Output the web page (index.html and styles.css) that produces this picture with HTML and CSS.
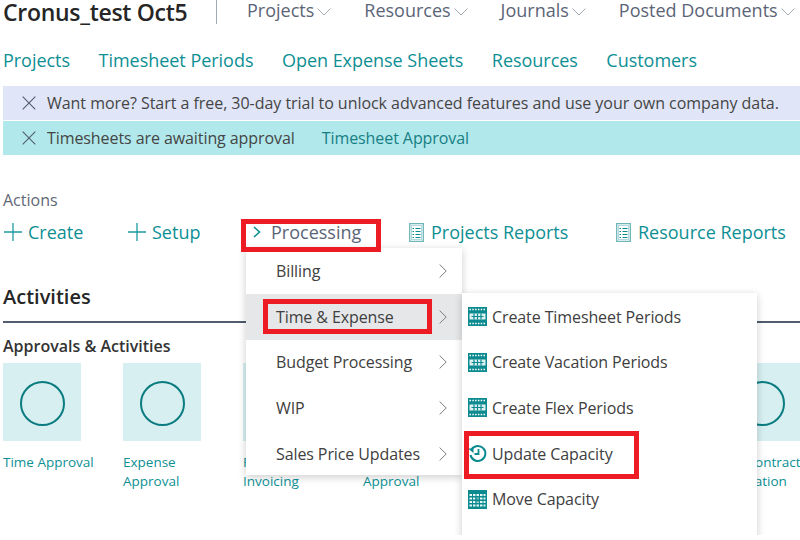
FILE: index.html
```html
<!DOCTYPE html>
<html>
<head>
<meta charset="utf-8">
<title>Cronus_test Oct5</title>
<link rel="stylesheet" href="styles.css">
</head>
<body>

<svg class="defs" width="0" height="0">
  <symbol id="grid" viewBox="0 0 19 19">
    <rect width="19" height="19" fill="#0b8a8f"/>
    <path d="M1.500 2.500h16M1.500 16.500h16" stroke="#fff" stroke-width="1.400" stroke-dasharray="1.500 1.300"/>
    <path d="M1.500 6.500h16v6h-16z" fill="#dff1f1"/>
    <path d="M3.500 9.500h12M6 6.500v6M9.500 6.500v6M13 6.500v6" stroke="#0b8a8f" stroke-width="1.200"/>
  </symbol>
  <symbol id="grid-move" viewBox="0 0 19 19">
    <rect width="19" height="19" fill="#0b8a8f"/>
    <path d="M1.500 5h16M1.500 8.500h16M1.500 12h16M1.500 15.500h16" stroke="#e6f5f5" stroke-width="2" stroke-dasharray="2.500 1"/>
    <path d="M7 7.500h5v5H7z" fill="#0b8a8f" opacity=".6"/>
  </symbol>
  <symbol id="report" viewBox="0 0 15 19">
    <path d="M.7.7h13.600v17.600H.7z" fill="none" stroke="#6db5b8" stroke-width="1.300"/>
    <path d="M2.500 2.500h10v14h-10z" fill="none" stroke="#0b8a8f" stroke-width=".7" opacity=".45"/>
    <path d="M3.500 5.500h1.500M6.500 5.500h5M3.500 8.500h1.500M6.500 8.500h5M3.500 11.500h1.500M6.500 11.500h5M3.500 14.500h1.500M6.500 14.500h5" stroke="#0b8a8f" stroke-width="1.100"/>
  </symbol>
  <symbol id="plus" viewBox="0 0 18 18">
    <path d="M9 0v18M0 9h18" stroke="#1b9a9e" stroke-width="1.300"/>
  </symbol>
  <symbol id="close" viewBox="0 0 14 14">
    <path d="M.7.7l12.600 12.600M13.300.7L.7 13.300" stroke="#505c6f" stroke-width="1.100"/>
  </symbol>
  <symbol id="down" viewBox="0 0 14 8">
    <path d="M.5.5L7 7l6.500-6.500" fill="none" stroke="#a5abb5" stroke-width="1"/>
  </symbol>
  <symbol id="right" viewBox="0 0 8 14">
    <path d="M.6.5L7.200 7 .6 13.500" fill="none" stroke="#7d7d7d" stroke-width="1"/>
  </symbol>
  <symbol id="caret" viewBox="0 0 8 12">
    <path d="M1 1l5.500 5L1 11" fill="none" stroke="#0d8f94" stroke-width="1.600"/>
  </symbol>
</svg>

<div class="page">

  <div class="topbar">
    <div class="company">Cronus_test Oct5</div>
    <div class="topnav">
      <span class="nav-item">Projects<svg class="down"><use href="#down"/></svg></span>
      <span class="nav-item">Resources<svg class="down"><use href="#down"/></svg></span>
      <span class="nav-item">Journals<svg class="down"><use href="#down"/></svg></span>
      <span class="nav-item">Posted Documents<svg class="down"><use href="#down"/></svg></span>
    </div>
  </div>

  <div class="quicklinks">
    <a>Projects</a>
    <a>Timesheet Periods</a>
    <a>Open Expense Sheets</a>
    <a>Resources</a>
    <a>Customers</a>
  </div>

  <div class="notice notice-trial">
    <svg class="close"><use href="#close"/></svg>
    <span>Want more? Start a free, 30-day trial to unlock advanced features and use your own company data.</span>
  </div>
  <div class="notice notice-approval">
    <svg class="close"><use href="#close"/></svg>
    <span>Timesheets are awaiting approval</span>
    <a class="notice-link">Timesheet Approval</a>
  </div>

  <div class="actions-label">Actions</div>
  <div class="actions">
    <a class="action action-create"><svg class="plus"><use href="#plus"/></svg>Create</a>
    <a class="action action-setup"><svg class="plus"><use href="#plus"/></svg>Setup</a>
    <a class="action action-processing"><svg class="caret"><use href="#caret"/></svg><span class="open-label">Processing</span></a>
    <a class="action action-projects"><svg class="report"><use href="#report"/></svg>Projects Reports</a>
    <a class="action"><svg class="report"><use href="#report"/></svg>Resource Reports</a>
  </div>

  <h2 class="section-title">Activities</h2>
  <h3 class="group-title">Approvals &amp; Activities</h3>

  <div class="tiles">
    <div class="tile"><div class="tile-box"><div class="ring"></div></div><div class="tile-label">Time Approval</div></div>
    <div class="tile"><div class="tile-box"><div class="ring"></div></div><div class="tile-label">Expense Approval</div></div>
    <div class="tile"><div class="tile-box"><div class="ring"></div></div><div class="tile-label">Project Invoicing</div></div>
    <div class="tile"><div class="tile-box"><div class="ring"></div></div><div class="tile-label">Pending Approval</div></div>
    <div class="tile"><div class="tile-box"><div class="ring"></div></div></div>
    <div class="tile"><div class="tile-box"><div class="ring"></div></div></div>
    <div class="tile"><div class="tile-box"><div class="ring"></div></div><div class="tile-label">Job Contract Expiration</div></div>
  </div>

  <!-- Processing menu -->
  <div class="menu">
    <div class="menu-row">Billing<svg class="right"><use href="#right"/></svg></div>
    <div class="menu-row menu-row-active">Time &amp; Expense<svg class="right"><use href="#right"/></svg></div>
    <div class="menu-row">Budget Processing<svg class="right"><use href="#right"/></svg></div>
    <div class="menu-row">WIP<svg class="right"><use href="#right"/></svg></div>
    <div class="menu-row">Sales Price Updates<svg class="right"><use href="#right"/></svg></div>
  </div>

  <!-- Time & Expense submenu -->
  <div class="submenu">
    <div class="sub-row"><svg class="grid"><use href="#grid"/></svg>Create Timesheet Periods</div>
    <div class="sub-row"><svg class="grid"><use href="#grid"/></svg>Create Vacation Periods</div>
    <div class="sub-row"><svg class="grid"><use href="#grid"/></svg>Create Flex Periods</div>
    <div class="sub-row">
      <svg class="grid" viewBox="0 0 19 19">
        <path d="M3.500 5.500A7.500 7.500 0 1 1 2.500 11" fill="none" stroke="#0b8a8f" stroke-width="2"/>
        <path d="M0 4.500h5.500v4.500z" fill="#0b8a8f"/>
        <path d="M10.500 5v5H6.500" fill="none" stroke="#0b8a8f" stroke-width="1.800"/>
      </svg>Update Capacity
    </div>
    <div class="sub-row"><svg class="grid"><use href="#grid-move"/></svg>Move Capacity</div>
    <div class="sub-row"><svg class="grid"><use href="#grid"/></svg></div>
  </div>

  <!-- red marks drawn over the screenshot -->
  <div class="mark mark-processing"></div>
  <div class="mark mark-time"></div>
  <div class="mark mark-update"></div>

</div>

</body>
</html>
```

FILE: styles.css
```css
body {
    margin: 0;
    background: #fff;
    font-family: "Open Sans", "Noto Sans", sans-serif;
    color: #333;
    overflow: hidden;
}

a {
    color: #0d8f94;
}

.defs {
    position: absolute;
}

.page {
    position: relative;
    height: 535px;
    overflow: hidden;
    padding-left: 3px;
}

/* Top bar */
.topbar {
    display: flex;
    align-items: center;
    height: 24px;
}

.company {
    flex: none;
    width: 213px;
    font-size: 23px;
    font-weight: 600;
    letter-spacing: -0.3px;
    color: #262626;
    white-space: nowrap;
}

.topnav {
    flex: none;
    display: flex;
    height: 24px;
    padding-left: 30px;
    border-left: 1px solid #a4abb6;
    font-size: 18px;
    line-height: 20px;
    color: #5b6577;
}

.nav-item {
    display: flex;
    margin-right: 33px;
    white-space: nowrap;
}

.nav-item:last-child {
    margin-right: 0;
}

.nav-item .down {
    width: 14px;
    height: 8px;
    margin: 8px 0 0 3px;
}

/* Quick links */
.quicklinks {
    display: flex;
    gap: 28.5px;
    height: 34px;
    margin-top: 20px;
    margin-bottom: 8px;
    font-size: 18px;
    line-height: 32px;
    letter-spacing: -0.03px;
    white-space: nowrap;
}

/* Notification bars */
.notice {
    display: flex;
    align-items: center;
    height: 34px;
    margin-bottom: 1px;
    padding-left: 19px;
    font-size: 16px;
    letter-spacing: -0.04px;
    color: #454545;
    white-space: nowrap;
}

.notice-trial {
    background: #e0e5f7;
}

.notice-approval {
    background: #b1e8eb;
    letter-spacing: -0.08px;
}

.notice .close {
    flex: none;
    width: 14px;
    height: 14px;
    margin-right: 11px;
}

.notice-link {
    margin-left: 27px;
    color: #177f84;
}

/* Actions */
.actions-label {
    margin-top: 34px;
    font-size: 16px;
    line-height: 22px;
    color: #5f6876;
}

.actions {
    display: flex;
    height: 30px;
    margin-top: 6px;
    padding-left: 1px;
    font-size: 18px;
    line-height: 30px;
    white-space: nowrap;
}

.action {
    display: flex;
    align-items: center;
}

.action-create {
    width: 124px;
}

.action-setup {
    width: 118px;
}

.action-processing {
    width: 163px;
}

.action-projects {
    width: 207px;
}

.plus {
    width: 18px;
    height: 18px;
    margin-right: 6px;
}

.report {
    width: 15px;
    height: 19px;
    margin-right: 7px;
}

.caret {
    width: 8px;
    height: 12px;
    margin: 0 10px 0 7px;
}

.open-label {
    color: #5b6577;
}

/* Activities */
.section-title {
    margin: 34px 0 0;
    height: 40px;
    border-bottom: 2px solid #505c6f;
    font-size: 20px;
    line-height: 32px;
    font-weight: 600;
    color: #262626;
}

.group-title {
    margin: 12px 0 6px;
    font-size: 16px;
    line-height: 22px;
    font-weight: 600;
    color: #333;
}

.tiles {
    display: grid;
    grid-template-columns: repeat(7, 120px);
}

.tile-box {
    display: flex;
    align-items: center;
    justify-content: center;
    box-sizing: border-box;
    width: 78px;
    height: 78px;
    padding-top: 3px;
    background: #d7eff1;
}

.ring {
    width: 45px;
    height: 45px;
    box-sizing: border-box;
    border: 2.5px solid #0a7c80;
    border-radius: 50%;
}

.tile-label {
    width: 100px;
    margin-top: 12px;
    font-size: 13.5px;
    line-height: 19px;
    color: #0d8f94;
}

/* Menus */
.menu,
.submenu {
    position: absolute;
    background: #fff;
    box-shadow: 0 2px 8px rgba(0, 0, 0, 0.2);
    font-size: 16px;
    letter-spacing: -0.1px;
    color: #404040;
    white-space: nowrap;
}

.menu {
    left: 246px;
    top: 248px;
    width: 216px;
    height: 227px;
}

.submenu {
    left: 462px;
    top: 293px;
    width: 295px;
    height: 260px;
    padding-top: 1px;
}

.menu-row {
    display: flex;
    align-items: center;
    justify-content: space-between;
    height: 45.8px;
    padding: 0 15px 0 30px;
}

.menu-row-active {
    background: #e6e7e9;
}

.right {
    width: 8px;
    height: 14px;
}

.sub-row {
    display: flex;
    align-items: center;
    height: 45.6px;
    padding-left: 6px;
}

.sub-row .grid {
    flex: none;
    width: 19px;
    height: 19px;
    margin-right: 5px;
}

/* Red marks */
.mark {
    position: absolute;
    box-sizing: border-box;
    border: 5px solid #ed1c24;
}

.mark-processing {
    left: 241px;
    top: 219px;
    width: 140px;
    height: 33px;
}

.mark-time {
    left: 263px;
    top: 299px;
    width: 169px;
    height: 35px;
}

.mark-update {
    left: 464px;
    top: 431px;
    width: 175px;
    height: 48px;
}
```
